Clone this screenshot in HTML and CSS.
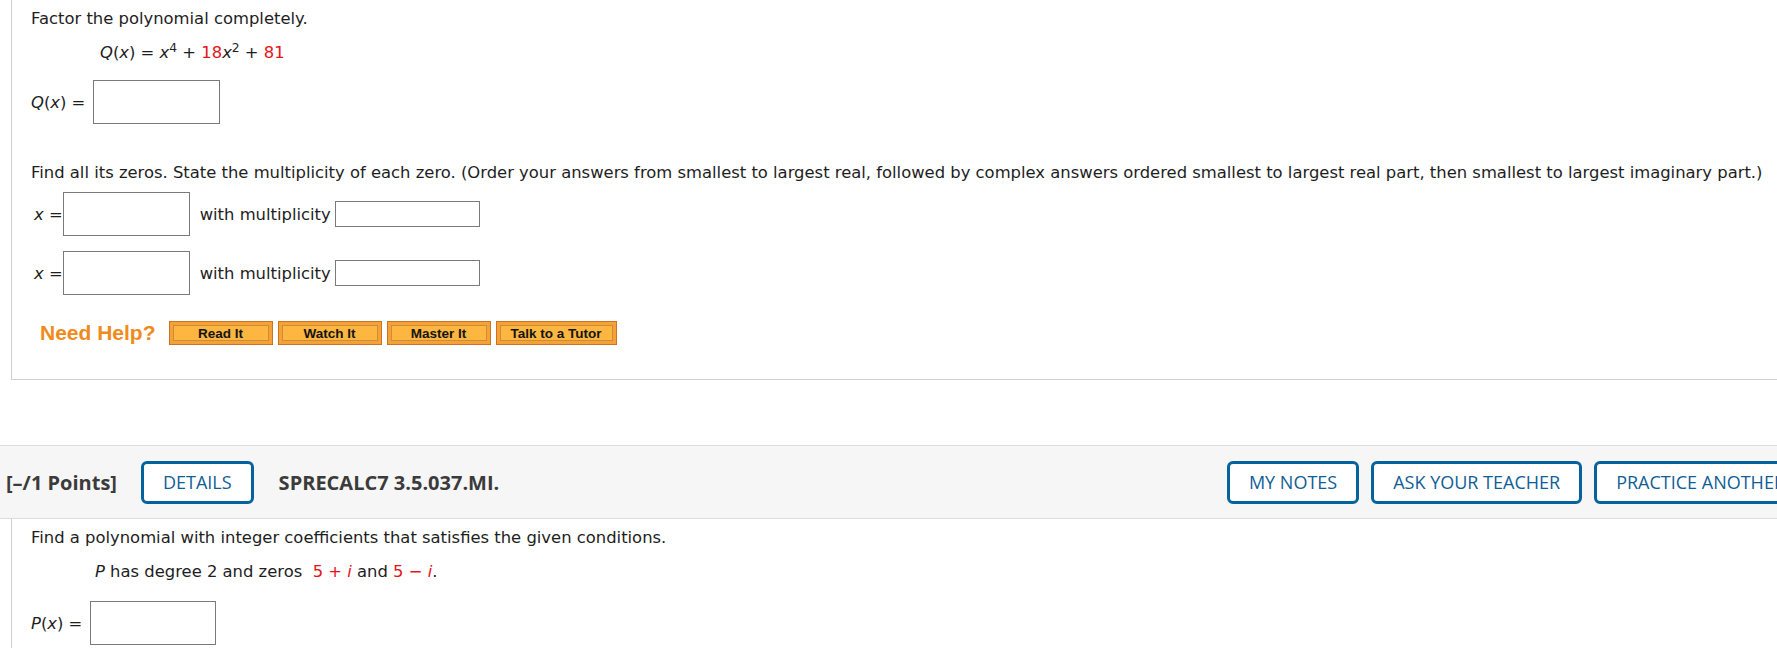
FILE: index.html
```html
<!DOCTYPE html>
<html lang="en">
<head>
<meta charset="utf-8">
<title>WebAssign</title>
<link rel="stylesheet" href="styles.css">
</head>
<body>
<div class="page">
  <div class="qbody qbody-top">
    <p class="line">Factor the polynomial completely.</p>
    <p class="line eq"><i>Q</i>(<i>x</i>) = <i>x</i><sup>4</sup> + <span class="red">18</span><i>x</i><sup>2</sup> + <span class="red">81</span></p>
    <div class="arow arow-q">
      <span class="lbl"><i>Q</i>(<i>x</i>) =</span>
      <span class="box box-big"></span>
    </div>
    <p class="line find">Find all its zeros. State the multiplicity of each zero. (Order your answers from smallest to largest real, followed by complex answers ordered smallest to largest real part, then smallest to largest imaginary part.)</p>
    <div class="zrow zrow-1">
      <span class="xlbl"><i>x</i> =</span>
      <span class="box box-big"></span>
      <span class="mult">with multiplicity</span>
      <span class="box box-small"></span>
    </div>
    <div class="zrow zrow-2">
      <span class="xlbl"><i>x</i> =</span>
      <span class="box box-big"></span>
      <span class="mult">with multiplicity</span>
      <span class="box box-small"></span>
    </div>
    <div class="help">
      <span class="need">Need Help?</span>
      <span class="hbtn">Read It</span>
      <span class="hbtn">Watch It</span>
      <span class="hbtn">Master It</span>
      <span class="hbtn">Talk to a Tutor</span>
    </div>
  </div>

  <div class="qhead">
    <span class="points">[–/1 Points]</span>
    <span class="obtn">DETAILS</span>
    <span class="qid">SPRECALC7 3.5.037.MI.</span>
    <div class="qhead-right">
      <span class="obtn">MY NOTES</span>
      <span class="obtn">ASK YOUR TEACHER</span>
      <span class="obtn">PRACTICE ANOTHER</span>
    </div>
  </div>

  <div class="qbody qbody-bottom">
    <p class="line">Find a polynomial with integer coefficients that satisfies the given conditions.</p>
    <p class="line eq eq-p"><i>P</i> has degree 2 and zeros <span class="red">&nbsp;5 + <i>i</i></span> and <span class="red">5 − <i>i</i></span>.</p>
    <div class="arow arow-p">
      <span class="lbl"><i>P</i>(<i>x</i>) =</span>
      <span class="box box-big box-p"></span>
    </div>
  </div>
</div>
</body>
</html>
```

FILE: styles.css
```css
html, body {
  margin: 0;
  padding: 0;
  overflow: hidden;
  background: #ffffff;
}

.page {
  width: 1826px;
  font-family: "DejaVu Sans", Verdana, sans-serif;
  font-size: 16.4px;
  color: #1e1e1e;
}

.qbody {
  margin-left: 11px;
  border-left: 1px solid #cfcfcf;
  padding-left: 19px;
}

.qbody-top {
  padding-top: 9px;
  padding-bottom: 34px;
  border-bottom: 1px solid #cfcfcf;
}

.qbody-bottom {
  padding-top: 9px;
  padding-bottom: 20px;
}

.line {
  margin: 0;
  line-height: 20px;
  white-space: nowrap;
}

.eq {
  margin-top: 14px;
  padding-left: 69px;
}

.eq-p {
  padding-left: 64px;
  margin-top: 14px;
}

sup {
  font-size: 0.75em;
  line-height: 0;
  vertical-align: 0.45em;
}

.red {
  color: #e4141b;
}

.arow {
  display: flex;
  align-items: center;
  gap: 8px;
}

.arow-q {
  margin-top: 17px;
}

.arow-p {
  margin-top: 19px;
}

.lbl {
  white-space: nowrap;
}

.box {
  display: block;
  flex-shrink: 0;
  box-sizing: border-box;
  border: 1px solid #7a7a7a;
  background: #ffffff;
}

.box-big {
  width: 127px;
  height: 44px;
}

.box-p {
  width: 126px;
}

.box-small {
  width: 145px;
  height: 26px;
}

.find {
  margin-top: 39px;
}

.zrow {
  display: flex;
  align-items: center;
  padding-left: 3px;
}

.zrow-1 {
  margin-top: 9px;
}

.zrow-2 {
  margin-top: 15px;
}

.xlbl {
  white-space: nowrap;
  flex-shrink: 0;
}

.mult {
  white-space: nowrap;
  margin-left: 10px;
  margin-right: 4px;
}

.help {
  display: flex;
  align-items: center;
  margin-top: 26px;
  padding-left: 9px;
}

.need {
  font-family: "Liberation Sans", Arial, sans-serif;
  font-weight: bold;
  font-size: 21px;
  color: #f08a1c;
  margin-right: 13px;
}

.hbtn {
  box-sizing: border-box;
  min-width: 104px;
  height: 24px;
  padding: 0 14px;
  margin-right: 5px;
  display: flex;
  align-items: center;
  justify-content: center;
  font-family: "Liberation Sans", Arial, sans-serif;
  font-weight: bold;
  font-size: 13.5px;
  color: #141414;
  background: #fdb640;
  border: 1px solid #c7732a;
  box-shadow: inset 0 0 0 3px #f8a133, inset 0 0 0 4px #c98c45;
}

.qhead {
  margin-top: 65px;
  height: 72px;
  background: #f6f6f6;
  border-top: 1px solid #dddddd;
  border-bottom: 1px solid #dddddd;
  display: flex;
  align-items: center;
  padding-left: 6px;
  padding-right: 19px;
  font-family: "Open Sans", sans-serif;
}

.points {
  font-weight: 700;
  font-size: 20px;
  color: #3b3b3b;
  margin-right: 24px;
}

.qid {
  font-weight: 700;
  font-size: 20px;
  color: #3b3b3b;
  margin-left: 25px;
}

.obtn {
  box-sizing: border-box;
  height: 43px;
  padding: 0 19px;
  display: flex;
  align-items: center;
  border: 3px solid #04639d;
  border-radius: 6px;
  background: #ffffff;
  color: #105e96;
  font-size: 18px;
  font-weight: 400;
  white-space: nowrap;
}

.qhead-right {
  margin-left: auto;
  display: flex;
  gap: 12px;
}
```
